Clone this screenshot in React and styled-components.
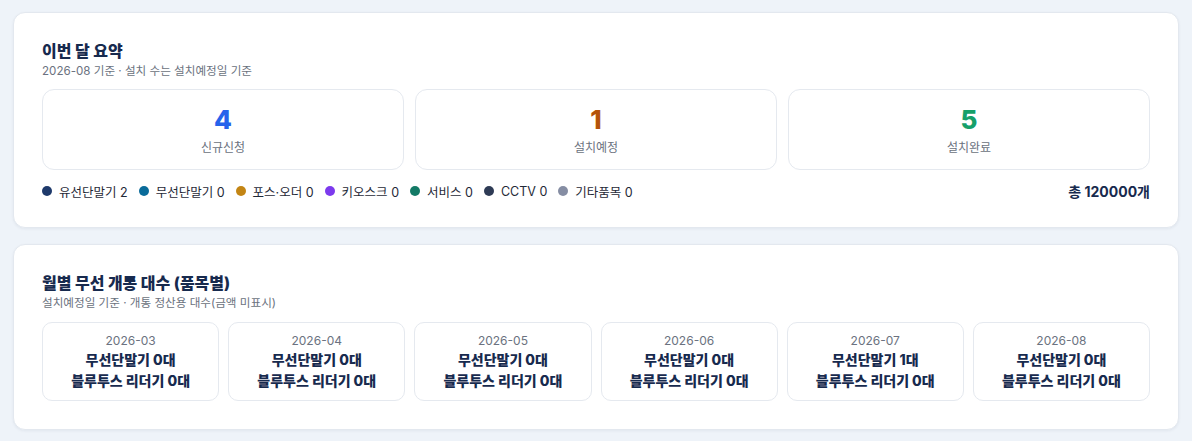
import React from "react";
import styled, { createGlobalStyle } from "styled-components";

const GlobalStyle = createGlobalStyle`
  body {
    margin: 0;
    background: #eef3f9;
    font-family: "Inter", "Noto Sans CJK KR", sans-serif;
    color: #1a2b4c;
  }
`;

const Page = styled.div`
  padding: 12px 13px;
  display: flex;
  flex-direction: column;
  gap: 16px;
`;

const Card = styled.section`
  background: #fff;
  border: 1px solid #e3e8ef;
  border-radius: 12px;
  box-shadow: 0 1px 3px rgba(15, 30, 60, 0.06);
  padding: 27px 28px ${(p) => p.$pb || 28}px;
`;

const Title = styled.h2`
  margin: 0;
  font-size: 16px;
  font-weight: 800;
  color: #172a4e;
  line-height: 22px;
`;

const Sub = styled.p`
  margin: 1px 0 0;
  font-size: 11.6px;
  color: #6b7280;
  line-height: 16px;
`;

const StatGrid = styled.div`
  margin-top: 10px;
  display: grid;
  grid-template-columns: repeat(3, 1fr);
  gap: 11px;
`;

const StatBox = styled.div`
  border: 1px solid #e5e9ef;
  border-radius: 12px;
  height: 79px;
  display: flex;
  flex-direction: column;
  align-items: center;
  justify-content: center;
`;

const StatNum = styled.div`
  font-size: 26px;
  font-weight: 800;
  line-height: 30px;
  color: ${(p) => p.$color};
`;

const StatLabel = styled.div`
  margin-top: 3px;
  font-size: 12px;
  color: #6b7280;
`;

const LegendRow = styled.div`
  margin-top: 11px;
  display: flex;
  align-items: center;
  justify-content: space-between;
`;

const Legend = styled.div`
  display: flex;
  align-items: center;
  gap: 11px;
`;

const LegendItem = styled.span`
  display: flex;
  align-items: center;
  gap: 7px;
  font-size: 12.5px;
  color: #1f2937;
`;

const Dot = styled.span`
  width: 10px;
  height: 10px;
  border-radius: 50%;
  background: ${(p) => p.$color};
`;

const Total = styled.span`
  font-size: 14px;
  font-weight: 700;
  color: #172a4e;
`;

const MonthGrid = styled.div`
  margin-top: 11px;
  display: grid;
  grid-template-columns: repeat(6, 1fr);
  gap: 9px;
`;

const MonthBox = styled.div`
  border: 1px solid #e5e9ef;
  border-radius: 10px;
  height: 77px;
  display: flex;
  flex-direction: column;
  align-items: center;
  justify-content: center;
`;

const MonthLabel = styled.div`
  font-size: 12px;
  color: #6b7280;
  line-height: 16px;
`;

const MonthLine = styled.div`
  font-size: 14px;
  font-weight: 800;
  color: #172a4e;
  line-height: 21px;
`;

const legend = [
  ["유선단말기", 2, "#1e3a6b"],
  ["무선단말기", 0, "#0a6b9a"],
  ["포스·오더", 0, "#c38514"],
  ["키오스크", 0, "#7c3aed"],
  ["서비스", 0, "#137a66"],
  ["CCTV", 0, "#2e3b55"],
  ["기타품목", 0, "#858da3"],
];

const months = [
  ["2026-03", 0, 0],
  ["2026-04", 0, 0],
  ["2026-05", 0, 0],
  ["2026-06", 0, 0],
  ["2026-07", 1, 0],
  ["2026-08", 0, 0],
];

export default function App() {
  return (
    <>
      <GlobalStyle />
      <Page>
        <Card $pb={26}>
          <Title>이번 달 요약</Title>
          <Sub>2026-08 기준 · 설치 수는 설치예정일 기준</Sub>
          <StatGrid>
            <StatBox>
              <StatNum $color="#2563eb">4</StatNum>
              <StatLabel>신규신청</StatLabel>
            </StatBox>
            <StatBox>
              <StatNum $color="#b45309">1</StatNum>
              <StatLabel>설치예정</StatLabel>
            </StatBox>
            <StatBox>
              <StatNum $color="#16a06a">5</StatNum>
              <StatLabel>설치완료</StatLabel>
            </StatBox>
          </StatGrid>
          <LegendRow>
            <Legend>
              {legend.map(([name, n, c]) => (
                <LegendItem key={name}>
                  <Dot $color={c} />
                  {name} {n}
                </LegendItem>
              ))}
            </Legend>
            <Total>총 120000개</Total>
          </LegendRow>
        </Card>
        <Card $pb={28}>
          <Title>월별 무선 개통 대수 (품목별)</Title>
          <Sub>설치예정일 기준 · 개통 정산용 대수(금액 미표시)</Sub>
          <MonthGrid>
            {months.map(([m, w, b]) => (
              <MonthBox key={m}>
                <MonthLabel>{m}</MonthLabel>
                <MonthLine>무선단말기 {w}대</MonthLine>
                <MonthLine>블루투스 리더기 {b}대</MonthLine>
              </MonthBox>
            ))}
          </MonthGrid>
        </Card>
      </Page>
    </>
  );
}
